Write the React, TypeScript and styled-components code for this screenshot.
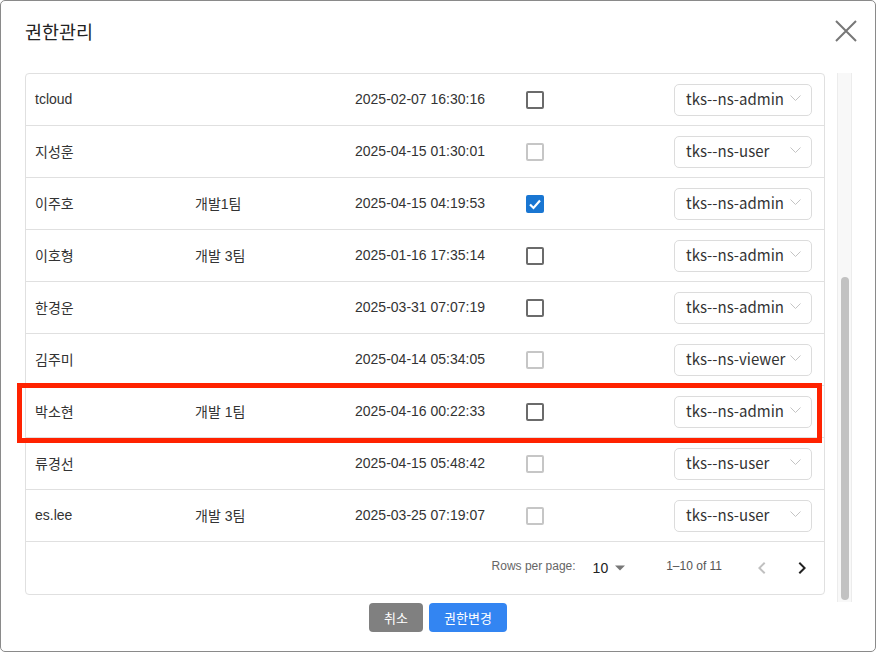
import React from "react";
import styled, { createGlobalStyle } from "styled-components";

const Global = createGlobalStyle`
  html, body { margin: 0; padding: 0; background: #fff; }
  body { font-family: "Liberation Sans", "Noto Sans CJK KR", sans-serif; }
  * { box-sizing: border-box; }
`;

const Modal = styled.div`
  position: relative;
  width: 876px;
  height: 652px;
  border: 1px solid #8a8a8a;
  border-radius: 5px;
  background: #fff;
  display: flex;
  flex-direction: column;
`;

const Header = styled.div`
  height: 72px;
  display: flex;
  align-items: center;
  justify-content: space-between;
  padding: 0 17px 12px 24px;
`;

const Title = styled.h1`
  margin: 0;
  font-family: "Noto Sans CJK KR", sans-serif;
  font-size: 18.5px;
  font-weight: 400;
  color: #222;
`;

const CloseBtn = styled.button`
  border: 0;
  background: none;
  padding: 0;
  width: 24px;
  height: 24px;
  display: flex;
  align-items: center;
  justify-content: center;
  cursor: pointer;
`;

const Body = styled.div`
  display: flex;
  align-items: flex-start;
  gap: 12px;
  padding-left: 24px;
`;

const TableBox = styled.div`
  width: 800px;
  height: 522px;
  border: 1px solid #e0e0e0;
  border-radius: 4px;
  display: flex;
  flex-direction: column;
`;

const Row = styled.div`
  height: 52px;
  border-bottom: 1px solid #e0e0e0;
  display: grid;
  grid-template-columns: 160px 160px 171px 148px 138px;
  align-items: center;
  padding-left: 9px;
  padding-bottom: 2px;
  font-size: 14px;
  color: #333;
`;

const Cell = styled.div`
  white-space: nowrap;
`;

const BoxCell = styled.div`
  padding-top: 2px;
`;

const Box = styled.span<{ $state: "on" | "off" | "disabled" }>`
  width: 18px;
  height: 18px;
  border-radius: 2px;
  display: flex;
  align-items: center;
  justify-content: center;
  border: 2px solid
    ${(p) => (p.$state === "on" ? "#1976d2" : p.$state === "off" ? "#6b6b6b" : "#c6c6c6")};
  background: ${(p) => (p.$state === "on" ? "#1976d2" : "#fff")};
`;

const Select = styled.div`
  height: 32px;
  margin-top: 2px;
  border: 1px solid #dcdcdc;
  border-radius: 5px;
  display: flex;
  align-items: center;
  justify-content: space-between;
  padding: 0 10px 2px 11px;
  font-family: "Noto Sans CJK KR", sans-serif;
  font-size: 15px;
  color: #333;
`;

const Pager = styled.div`
  height: 52px;
  display: flex;
  align-items: center;
  justify-content: flex-end;
  padding: 0 10px 4px 0;
  font-size: 12px;
  color: #666;
`;

const PagerLabel = styled.span`
  margin-right: 17px;
`;

const PerPage = styled.span`
  display: flex;
  align-items: center;
  gap: 6px;
  font-size: 14px;
  color: #222;
  margin-right: 40px;
  padding-top: 3px;
`;

const Range = styled.span`
  margin-right: 12px;
  color: #555;
`;

const NavBtn = styled.span`
  width: 24px;
  height: 24px;
  display: flex;
  align-items: center;
  justify-content: center;
  margin-left: 16px;
  padding-top: 3px;
`;

const Track = styled.div`
  width: 15px;
  height: 529px;
  background: #f8f8f8;
  border-left: 1px solid #ececec;
  border-right: 1px solid #ececec;
  display: flex;
  flex-direction: column;
  justify-content: flex-end;
  align-items: center;
  padding-bottom: 2px;
`;

const Thumb = styled.div`
  width: 8px;
  height: 323px;
  background: #c2c2c2;
  border-radius: 4px;
`;

const Footer = styled.div`
  display: flex;
  justify-content: center;
  gap: 6px;
  margin-top: 1px;
`;

const Btn = styled.button<{ $primary?: boolean }>`
  height: 29px;
  padding: 0 ${(p) => (p.$primary ? "15px" : "15px")};
  border: 0;
  border-radius: 4px;
  background: ${(p) => (p.$primary ? "#3385f2" : "#808080")};
  color: #fff;
  font-family: "Noto Sans CJK KR", sans-serif;
  font-size: 13px;
  cursor: pointer;
`;

const Highlight = styled.div`
  position: absolute;
  left: 16px;
  top: 382px;
  width: 805px;
  height: 60px;
  border: 5px solid #ff2200;
  pointer-events: none;
`;

type R = { name: string; team: string; date: string; cb: "on" | "off" | "disabled"; role: string };

const rows: R[] = [
  { name: "tcloud", team: "", date: "2025-02-07 16:30:16", cb: "off", role: "tks--ns-admin" },
  { name: "지성훈", team: "", date: "2025-04-15 01:30:01", cb: "disabled", role: "tks--ns-user" },
  { name: "이주호", team: "개발1팀", date: "2025-04-15 04:19:53", cb: "on", role: "tks--ns-admin" },
  { name: "이호형", team: "개발 3팀", date: "2025-01-16 17:35:14", cb: "off", role: "tks--ns-admin" },
  { name: "한경운", team: "", date: "2025-03-31 07:07:19", cb: "off", role: "tks--ns-admin" },
  { name: "김주미", team: "", date: "2025-04-14 05:34:05", cb: "disabled", role: "tks--ns-viewer" },
  { name: "박소현", team: "개발 1팀", date: "2025-04-16 00:22:33", cb: "off", role: "tks--ns-admin" },
  { name: "류경선", team: "", date: "2025-04-15 05:48:42", cb: "disabled", role: "tks--ns-user" },
  { name: "es.lee", team: "개발 3팀", date: "2025-03-25 07:19:07", cb: "disabled", role: "tks--ns-user" },
];

const Chevron = () => (
  <svg width="11" height="7" viewBox="0 0 11 7">
    <polyline points="0.5,0.5 5.5,5.5 10.5,0.5" fill="none" stroke="#c4c4c4" strokeWidth="1" />
  </svg>
);

export default function App() {
  return (
    <>
      <Global />
      <Modal>
        <Header>
          <Title>권한관리</Title>
          <CloseBtn aria-label="close">
            <svg width="22" height="22" viewBox="0 0 22 22">
              <path d="M1 1 L21 21 M21 1 L1 21" stroke="#777" strokeWidth="2" fill="none" />
            </svg>
          </CloseBtn>
        </Header>
        <Body>
          <TableBox>
            {rows.map((r) => (
              <Row key={r.name}>
                <Cell>{r.name}</Cell>
                <Cell>{r.team}</Cell>
                <Cell>{r.date}</Cell>
                <BoxCell>
                  <Box $state={r.cb}>
                    {r.cb === "on" && (
                      <svg width="14" height="14" viewBox="0 0 14 14">
                        <polyline points="2,7.5 5.5,11 12,3.5" fill="none" stroke="#fff" strokeWidth="2.2" />
                      </svg>
                    )}
                  </Box>
                </BoxCell>
                <Select>
                  <span>{r.role}</span>
                  <Chevron />
                </Select>
              </Row>
            ))}
            <Pager>
              <PagerLabel>Rows per page:</PagerLabel>
              <PerPage>
                10
                <svg width="12" height="6" viewBox="0 0 12 6">
                  <polygon points="1,0.5 11,0.5 6,5.5" fill="#777" />
                </svg>
              </PerPage>
              <Range>1–10 of 11</Range>
              <NavBtn>
                <svg width="24" height="24" viewBox="0 0 24 24">
                  <path d="M15.41 7.41 14 6l-6 6 6 6 1.41-1.41L10.83 12z" fill="#c0c0c0" />
                </svg>
              </NavBtn>
              <NavBtn>
                <svg width="24" height="24" viewBox="0 0 24 24">
                  <path d="M8.59 16.59 13.17 12 8.59 7.41 10 6l6 6-6 6z" fill="#222" />
                </svg>
              </NavBtn>
            </Pager>
          </TableBox>
          <Track>
            <Thumb />
          </Track>
        </Body>
        <Footer>
          <Btn>취소</Btn>
          <Btn $primary>권한변경</Btn>
        </Footer>
        <Highlight />
      </Modal>
    </>
  );
}
